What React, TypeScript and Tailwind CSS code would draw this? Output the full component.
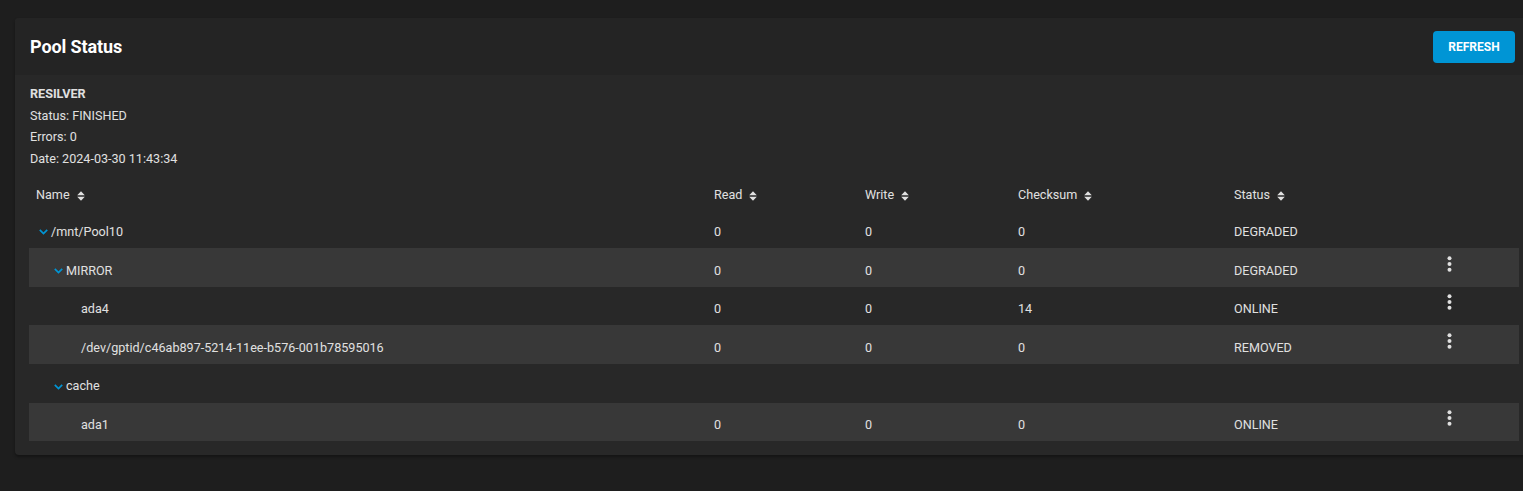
import React from "react";

const cols = "grid grid-cols-[678px_151px_153px_216px_193px_1fr]";

function SortIcon() {
  return (
    <svg width="8" height="10" viewBox="0 0 8 10" className="shrink-0">
      <path d="M4 0.3 L7.8 4.2 L0.2 4.2 Z M0.2 5.8 L7.8 5.8 L4 9.7 Z" fill="#e0e0e0" />
    </svg>
  );
}

function Chevron() {
  return (
    <svg width="9" height="6" viewBox="0 0 9 6" className="ml-[3px] mr-[3px] shrink-0">
      <polyline points="0.8,0.9 4.5,4.6 8.2,0.9" fill="none" stroke="#0095d5" strokeWidth="1.7" />
    </svg>
  );
}

function Dots() {
  return (
    <svg width="5" height="16" viewBox="0 0 5 16" className="mb-[8px]">
      <circle cx="2.5" cy="2.3" r="2" fill="#e0e0e0" />
      <circle cx="2.5" cy="8" r="2" fill="#e0e0e0" />
      <circle cx="2.5" cy="13.7" r="2" fill="#e0e0e0" />
    </svg>
  );
}

type Row = {
  name: string;
  level: number;
  expandable: boolean;
  read?: string;
  write?: string;
  checksum?: string;
  status?: string;
  actions: boolean;
  striped: boolean;
};

const rows: Row[] = [
  { name: "/mnt/Pool10", level: 0, expandable: true, read: "0", write: "0", checksum: "0", status: "DEGRADED", actions: false, striped: false },
  { name: "MIRROR", level: 1, expandable: true, read: "0", write: "0", checksum: "0", status: "DEGRADED", actions: true, striped: true },
  { name: "ada4", level: 2, expandable: false, read: "0", write: "0", checksum: "14", status: "ONLINE", actions: true, striped: false },
  { name: "/dev/gptid/c46ab897-5214-11ee-b576-001b78595016", level: 2, expandable: false, read: "0", write: "0", checksum: "0", status: "REMOVED", actions: true, striped: true },
  { name: "cache", level: 1, expandable: true, actions: false, striped: false },
  { name: "ada1", level: 2, expandable: false, read: "0", write: "0", checksum: "0", status: "ONLINE", actions: true, striped: true },
];

const indent = ["pl-[7px]", "pl-[22px]", "pl-[37px]"];

export default function App() {
  return (
    <div
      className="w-[1523px] h-[491px] overflow-hidden bg-[#1e1e1e] pt-[18px] pl-[15px] text-[#e0e0e0]"
      style={{ fontFamily: "Roboto, 'Liberation Sans', sans-serif" }}
    >
      <div className="w-[1516px] rounded-[4px] bg-[#282828] shadow-[0_2px_3px_rgba(0,0,0,0.35)]">
        <div className="h-[57px] bg-[#242424] rounded-t-[4px] flex items-center justify-between pl-[15px] pr-[16px]">
          <div className="text-[18px] font-bold text-white tracking-[-0.1px]">Pool Status</div>
          <button className="h-[32px] w-[82px] rounded-[4px] bg-[#0095d5] text-white text-[12px] font-bold">
            REFRESH
          </button>
        </div>
        <div className="pl-[14px] pr-[12px] pt-[8px] pb-[14px]">
          <div className="pl-[1px] text-[12.6px] leading-[21.67px]">
            <div className="font-bold">RESILVER</div>
            <div>Status: FINISHED</div>
            <div>Errors: 0</div>
            <div>Date: 2024-03-30 11:43:34</div>
          </div>
          <div className={`${cols} mt-[10px] h-[30px] text-[12.6px]`}>
            {["Name", "Read", "Write", "Checksum", "Status"].map((h) => (
              <div key={h} className="flex items-center gap-[7px] pl-[7px] pt-[2px]">
                <span>{h}</span>
                <SortIcon />
              </div>
            ))}
            <div />
          </div>
          {rows.map((r) => (
            <div
              key={r.name}
              className={`${cols} h-[38.6px] text-[12.6px] ${r.striped ? "bg-[#383838]" : ""}`}
            >
              <div className={`flex items-center pt-[7px] ${indent[r.level]}`}>
                <span className="w-[15px] shrink-0 flex items-center">
                  {r.expandable ? <Chevron /> : null}
                </span>
                <span className="whitespace-nowrap">{r.name}</span>
              </div>
              <div className="flex items-center pt-[7px] pl-[7px]">{r.read}</div>
              <div className="flex items-center pt-[7px] pl-[7px]">{r.write}</div>
              <div className="flex items-center pt-[7px] pl-[7px]">{r.checksum}</div>
              <div className="flex items-center pt-[7px] pl-[7px]">{r.status}</div>
              <div className="flex items-center pl-[27px]">{r.actions ? <Dots /> : null}</div>
            </div>
          ))}
        </div>
      </div>
    </div>
  );
}
